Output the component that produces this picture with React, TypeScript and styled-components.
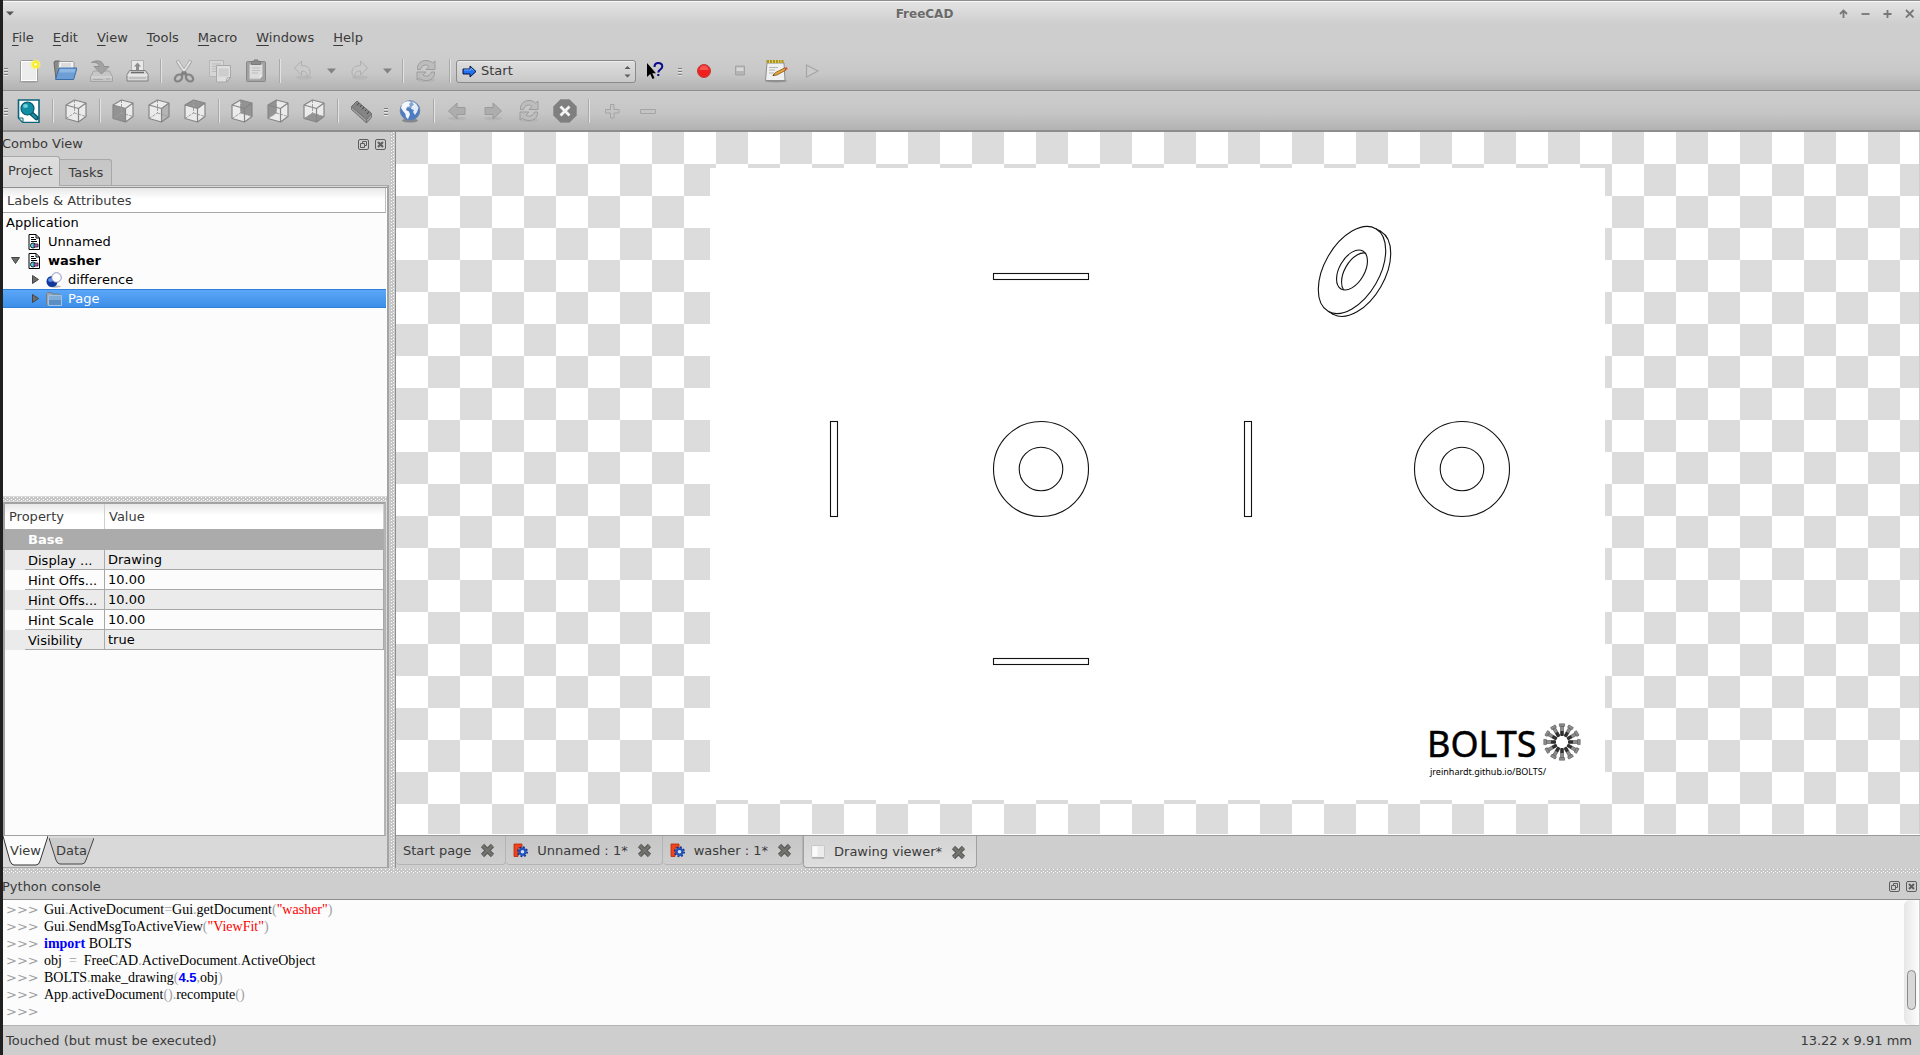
import React from "react";
import styled, { createGlobalStyle, css } from "styled-components";

const UI = `"DejaVu Sans", "Liberation Sans", sans-serif`;
const INK = "#3a3a3a";

const Global = createGlobalStyle`
  *, *::before, *::after { box-sizing: border-box; }
  body { margin: 0; background: #cecece; color: ${INK}; font: 13px/16px ${UI}; }
  button, select { font: inherit; color: inherit; margin: 0; padding: 0; border: 0; background: none; }
  ul { list-style: none; margin: 0; padding: 0; }
  svg { display: block; flex: none; }
`;

/* ---------- window chrome ---------- */

const Window = styled.div`
  display: flex;
  flex-direction: column;
  min-height: 100vh;
  border-left: 3px solid #202020;
  background: #cecece;
`;

const TitleBar = styled.header`
  display: flex;
  align-items: center;
  height: 24px;
  padding-top: 2px;
  border-top: 1px solid #8e8e8e;
  box-shadow: inset 0 1px #f8f8f8;
  background: linear-gradient(#e4e4e4, #cecece);
`;

const Title = styled.h1`
  flex: 1;
  margin: 0;
  font-size: 12px;
  line-height: 16px;
  font-weight: bold;
  text-align: center;
  color: #6a6a6a;
  text-shadow: 0 1px #e6e6e6;
`;

const WindowButton = styled.button<{ $narrow?: boolean }>`
  display: grid;
  place-items: center;
  width: ${(p) => (p.$narrow ? 14 : 22)}px;
  height: 20px;
`;

const MenuBar = styled.nav`
  display: flex;
  height: 28px;
  padding-left: 2px;
`;

const MenuItem = styled.button`
  height: 28px;
  padding: 0 11px 0 7px;
  margin-right: 1px;
  text-align: left;
  &::first-letter { text-decoration: underline; text-underline-offset: 3px; }
`;

const Toolbar = styled.div<{ $last?: boolean }>`
  display: flex;
  align-items: center;
  height: ${(p) => (p.$last ? 41 : 39)}px;
  border-bottom: ${(p) => (p.$last ? 2 : 1)}px solid #8e8e8e;
  background: ${(p) =>
    p.$last ? "linear-gradient(#cdcdcd, #c6c6c6 55%, #b2b2b2)" : "linear-gradient(#cecece, #c8c8c8 55%, #b3b3b3)"};
`;

const Grip = styled.span<{ $wide?: boolean }>`
  width: ${(p) => (p.$wide ? 13 : 8)}px;
  height: 8px;
  padding: 0 ${(p) => (p.$wide ? "4px 0 5px" : "3px 0 1px")};
  margin-top: 2px;
  background: repeating-linear-gradient(#7c7c7c 0 1px, #e6e6e6 1px 2px, transparent 2px 3px) content-box;
`;

const Separator = styled.span`
  width: 11px;
  height: 24px;
  border-left: 5px solid transparent;
  background: linear-gradient(90deg, #a9a9a9 1px, #e2e2e2 1px 2px, transparent 2px) padding-box;
`;

const ToolButton = styled.button<{ $menu?: boolean }>`
  display: grid;
  place-items: center;
  width: ${(p) => (p.$menu ? 20 : 36)}px;
  height: 32px;
`;

const Workbench = styled.div`
  display: grid;
  align-items: center;
  width: 180px;
  height: 23px;
  margin: 0 1px;
  border: 1px solid #8a8a8a;
  border-radius: 3px;
  background: linear-gradient(#dedede, #c9c9c9);
  box-shadow: inset 0 1px #ededed;
  > * { grid-area: 1 / 1; }
  > svg { pointer-events: none; margin-left: 5px; }
  > svg:last-child { justify-self: end; margin-right: 4px; }
`;

const WorkbenchSelect = styled.select`
  appearance: none;
  width: 100%;
  height: 21px;
  padding-left: 24px;
  outline: none;
`;

/* ---------- work area ---------- */

const Work = styled.main`
  display: flex;
  flex: 1;
  min-height: 0;
`;

const dots = css`
  background:
    conic-gradient(at 1px 1px, transparent 75%, #fff 0) 0 0 / 4px 3px,
    conic-gradient(at 1px 1px, transparent 75%, #fff 0) 2px 1px / 4px 3px,
    #c6c6c6;
  background-clip: content-box;
`;

const Splitter = styled.div<{ $vertical?: boolean }>`
  flex: none;
  ${(p) => (p.$vertical ? "width: 7px; padding: 0 1px; border-right: 1px solid #8e8e8e;" : "height: 6px; padding: 1px 0;")}
  ${dots}
`;

const SidePanel = styled.aside`
  display: flex;
  flex-direction: column;
  flex: none;
  width: 386px;
`;

const DockTitle = styled.div<{ $line?: boolean }>`
  display: flex;
  align-items: center;
  flex: none;
  height: ${(p) => (p.$line ? 26 : 24)}px;
  padding-right: 3px;
  ${(p) => p.$line && "border-bottom: 1px solid #8e8e8e;"}
  h2 { flex: 1; margin: 0 0 0 -1px; font: inherit; }
`;

const DockButton = styled.button`
  width: 11px;
  height: 11px;
  margin-left: 6px;
`;

const ComboTabs = styled.div`
  display: flex;
  align-items: flex-end;
  flex: none;
  height: 30px;
  border-bottom: 1px solid #a8a8a8;
`;

const ComboTab = styled.button<{ $active?: boolean }>`
  height: ${(p) => (p.$active ? 30 : 26)}px;
  padding: ${(p) => (p.$active ? "0 7px 2px 5px" : "0 8px")};
  margin-bottom: ${(p) => (p.$active ? -1 : 0)}px;
  border: 1px solid #a8a8a8;
  border-width: 1px 1px 0 0;
  border-radius: 0 3px 0 0;
  background: ${(p) => (p.$active ? "linear-gradient(#dedede, #d6d6d6)" : "linear-gradient(#c6c6c6, #cacaca)")};
`;

const ComboPane = styled.div`
  display: flex;
  flex-direction: column;
  flex: 1;
  padding-top: 1px;
  border-right: 2px solid #a4a4a4;
  border-bottom: 1px solid #a4a4a4;
  background: #d9d9d9;
`;

const Tree = styled.section`
  flex: none;
  height: 309px;
  border-top: 1px solid #8e8e8e;
  background: #fcfcfc;
`;

const TreeHeader = styled.div`
  height: 25px;
  padding: 5px 4px 3px;
  margin-right: 1px;
  border-right: 1px solid #c0c0c0;
  border-bottom: 1px solid #a8a8a8;
  background: linear-gradient(#e8e8e8, #fff 45%);
`;

const TreeRow = styled.li<{ $depth: number; $bold?: boolean; $selected?: boolean }>`
  display: flex;
  align-items: center;
  height: 19px;
  margin-right: 1px;
  padding-left: ${(p) => p.$depth * 20 + 3}px;
  color: ${(p) => (p.$selected ? "#fff" : "#000")};
  font-weight: ${(p) => (p.$bold ? "bold" : "normal")};
  ${(p) =>
    p.$selected &&
    "background: linear-gradient(#5ba6f8, #3d8fe8); border-top: 1px solid #2f80d8; border-bottom: 1px solid #2f80d8;"}
`;

const Arrow = styled.span`
  display: grid;
  place-items: center;
  width: 19px;
`;

const TreeIcon = styled.span`
  display: grid;
  place-items: center;
  width: 16px;
  margin-left: 1px;
  margin-right: 6px;
`;

const PropertyFrame = styled.section`
  flex: 1;
  margin: 0 1px 0 0;
  border: 2px solid #a2a2a2;
  border-right-color: #b4b4b4;
  border-bottom: 1px solid #a2a2a2;
  background: #fcfcfc;
`;

const PropertyTable = styled.table`
  width: 100%;
  border-collapse: separate;
  border-spacing: 0;
  table-layout: fixed;
  color: #000;
  th, td { padding: 1px 0 0; text-align: left; font-weight: normal; overflow: hidden; white-space: nowrap; }
`;

const HeadCell = styled.th<{ $first?: boolean }>`
  width: ${(p) => (p.$first ? "100px" : "auto")};
  height: 25px;
  color: ${INK};
  border-right: 1px solid #d0d0d0;
  background: linear-gradient(#e8e8e8, #fff 45%);
  && { padding-left: 4px; }
`;

const GroupCell = styled.th`
  height: 21px;
  background: #ababab;
  color: #fff;
  && { padding-left: 23px; font-weight: bold; }
`;

const PropertyRow = styled.tr<{ $shade: boolean }>`
  background: ${(p) => (p.$shade ? "#ebebeb" : "#fcfcfc")};
`;

const NameCell = styled.th`
  height: 20px;
  border-right: 1px solid #a8a8a8;
  background: linear-gradient(#a8a8a8, #a8a8a8) 20px 100% / 100% 1px no-repeat;
  && { padding-left: 23px; }
`;

const ValueCell = styled.td`
  border: 1px solid #a8a8a8;
  border-width: 0 1px 1px 0;
  && { padding-left: 3px; }
`;

const ViewTabs = styled.div`
  display: flex;
  height: 31px;
`;

const ViewTab = styled.button<{ $active?: boolean }>`
  display: grid;
  place-items: center;
  height: 30px;
  margin-right: ${(p) => (p.$active ? 1 : 0)}px;
  > * { grid-area: 1 / 1; }
`;

/* ---------- drawing viewer ---------- */

const Viewer = styled.section`
  display: flex;
  flex-direction: column;
  flex: 1;
  min-width: 0;
`;

const Canvas = styled.div`
  display: grid;
  place-items: center;
  flex: 1;
  margin-right: 1px;
  background: conic-gradient(#fff 25%, #dcdcdc 0 50%, #fff 0 75%, #dcdcdc 0) 0 0 / 64px 64px;
`;

const DocTabs = styled.div`
  display: flex;
  align-items: flex-start;
  height: 33px;
  border-top: 1px solid #999;
  box-shadow: 0 -1px #fff;
`;

const DocTab = styled.div<{ $active?: boolean }>`
  display: flex;
  align-items: center;
  height: ${(p) => (p.$active ? 32 : 29)}px;
  padding: 1px 10px 0 7px;
  border: 1px solid ${(p) => (p.$active ? "#a0a0a0" : "#b4b4b4")};
  border-top: 0;
  border-left-width: ${(p) => (p.$active ? 1 : 0)}px;
  border-radius: 0 0 4px 4px;
  background: ${(p) => (p.$active ? "linear-gradient(#d4d4d4, #dedede)" : "linear-gradient(#c6c6c6, #cecece)")};
  > svg { margin-right: 9px; }
`;

const DocTabLabel = styled.button`
  margin-right: 9px;
`;

const CloseButton = styled.button`
  width: 15px;
  height: 15px;
`;

/* ---------- console & status ---------- */

const Console = styled.section`
  display: flex;
  flex: none;
  height: 126px;
  margin-right: 1px;
  border-bottom: 1px solid #b4b4b4;
  background: #fcfcfc;
`;

const ConsoleText = styled.div`
  flex: 1;
  padding: 1px 0 0 3px;
  color: #000;
  font: 14px/17px "Liberation Serif", "DejaVu Serif", serif;
`;

const Line = styled.div`
  display: flex;
  height: 17px;
  white-space: pre;
`;

const Prompt = styled.span`
  width: 38px;
  color: #a0a0a0;
  font: 13px/17px ${UI};
`;

const Token = styled.span<{ $kind?: string }>`
  ${(p) => p.$kind === "op" && "color: #a0a0a0;"}
  ${(p) => p.$kind === "str" && "color: #f00;"}
  ${(p) => p.$kind === "kw" && "color: #00f; font-weight: bold;"}
  ${(p) => p.$kind === "num" && `color: #00f; font: bold 13px/17px "Liberation Sans", sans-serif;`}
`;

const ScrollTrack = styled.div`
  display: flex;
  align-items: flex-end;
  justify-content: center;
  width: 15px;
  padding-bottom: 15px;
  border-radius: 6px;
  background: linear-gradient(90deg, #e6e6e6, #fdfdfd);
`;

const ScrollThumb = styled.div`
  width: 9px;
  height: 40px;
  border: 1px solid #8a8a8a;
  border-radius: 5px;
  background: #d8d8d8;
`;

const StatusBar = styled.footer`
  display: flex;
  justify-content: space-between;
  align-items: center;
  height: 29px;
  padding: 0 8px 0 3px;
`;

/* ---------- icons ---------- */

const Svg = ({ children, w = 24, h = w }: { children: React.ReactNode; w?: number; h?: number }) => (
  <svg width={w} height={h} viewBox={`0 0 ${w} ${h}`} fill="none" aria-hidden="true">
    {children}
  </svg>
);

const NewIcon = () => (
  <Svg>
    <ellipse cx="12" cy="22.8" rx="10" ry="1" fill="#8c8c8c" opacity=".5" />
    <rect x="3.5" y="1.5" width="17" height="21" rx="1" fill="#ededed" stroke="#9c9c9c" />
    <rect x="4.5" y="2.5" width="15" height="19" stroke="#fff" />
    <circle cx="18.5" cy="5.5" r="5" fill="#fbf36a" opacity=".7" />
    <circle cx="18.5" cy="5.5" r="3.2" fill="#fcee10" />
    <circle cx="18.5" cy="5.5" r="1.4" fill="#fffde0" />
  </Svg>
);

const OpenIcon = () => (
  <Svg>
    <path d="M1 3.5 2 2h5l1 1.5h12V20H3z" fill="#8a8a8a" stroke="#666" />
    <path d="M6 2.5h14l1 1V12H5z" fill="#f4f4f4" stroke="#9a9a9a" />
    <path d="M8 5h10M8 7h10" stroke="#c2c2c2" />
    <path d="M6 9h18l-3.4 11.5H2.6z" fill="#6d9fd6" stroke="#3b6ea8" />
    <path d="M7 10h15.6l-1 3.4H6z" fill="#8db6e2" />
  </Svg>
);

const SaveIcon = () => (
  <Svg>
    <path d="M4.5 12h16l3 6v4.5h-22V18z" fill="#c6c6c6" stroke="#a3a3a3" />
    <path d="M2 18h21" stroke="#dcdcdc" />
    <path d="M4 20.5h10M17 20h4" stroke="#a9a9a9" />
    <path d="M2.5 3.5C8 .5 14 1.5 15 7.5h5L12.5 15 5 7.5h5c0-3-3-4.5-7.5-4z" fill="#a2a2a2" stroke="#929292" />
  </Svg>
);

const PrintIcon = () => (
  <Svg>
    <path d="M6.5 1.5h12V14h-12z" fill="#e8e8e8" stroke="#b0b0b0" />
    <path d="M12.5 3.5 16 7.5h-2V11h-3V7.5H9z" fill="#8d8d8d" />
    <path d="M4.5 11.5h16l2.500 4V22H2v-6.5z" fill="#d8d8d8" stroke="#7e7e7e" />
    <path d="M2.5 16h20" stroke="#f5f5f5" />
    <path d="M6 13.5h13" stroke="#6b6b6b" strokeWidth="1.5" />
    <path d="M4 19h17" stroke="#a8a8a8" />
  </Svg>
);

const CutIcon = () => (
  <Svg>
    <path d="M5 1.5 14.5 16M19 1.5 9.5 16" stroke="#a6a6a6" strokeWidth="3.4" />
    <path d="M5.5 2 14 15M18.5 2 10 15" stroke="#e3e3e3" strokeWidth="1.8" />
    <path d="M12 12.5 9.5 16.5M12 12.5l2.500 4" stroke="#808080" strokeWidth="3" />
    <ellipse cx="6.5" cy="19" rx="4" ry="3" transform="rotate(-38 6.5 19)" stroke="#858585" strokeWidth="2.3" />
    <ellipse cx="17.5" cy="19" rx="4" ry="3" transform="rotate(38 17.5 19)" stroke="#858585" strokeWidth="2.3" />
  </Svg>
);

const CopyIcon = () => (
  <Svg>
    <path d="M1.5 1.5h14v16h-14z" fill="#d6d6d6" stroke="#b6b6b6" />
    <path d="M4 5h9M4 7.5h9M4 10h4M4 12.500h4" stroke="#b9b9b9" />
    <path d="M8.5 6.5h14v12l-4 4.5h-10z" fill="#dedede" stroke="#a8a8a8" />
    <path d="M10.5 9.5h10v8h-10z" fill="#cdcdcd" />
    <path d="m18.5 23 .5-4 3.5-.5z" fill="#f6f6f6" stroke="#a0a0a0" />
  </Svg>
);

const PasteIcon = () => (
  <Svg>
    <rect x="2.5" y="2.5" width="19" height="20" rx="1" fill="#a2a2a2" stroke="#868686" />
    <path d="M5.5 5.5h13v11l-3 3.5h-10z" fill="#dcdcdc" stroke="#bbb" />
    <path d="M8 9h8M8 11.5h8M8 14h6" stroke="#bcbcbc" />
    <path d="m15.5 20 .3-3.2 2.700-.3z" fill="#f2f2f2" />
    <path d="M7.5 5.5v-3H10V1h4v1.5h2.5v3z" fill="#8c8c8c" stroke="#7a7a7a" />
  </Svg>
);

const UndoIcon = ({ flip }: { flip?: boolean }) => (
  <Svg>
    <ellipse cx="13" cy="18.500" rx="8" ry="2" fill="#aaa" opacity=".4" />
    <g transform={flip ? "matrix(-1 0 0 1 24 0)" : undefined}>
      <path
        d="M3.500 9 10.500 2v4.500c5.500 0 9 3 8.500 7.500-.3 2-1.500 3.500-3 4.500 1-4-.8-6.500-5.500-6.500V16z"
        fill="#cacaca"
        stroke="#afafaf"
      />
    </g>
  </Svg>
);

const DropIcon = () => (
  <Svg w={9} h={6}>
    <path d="M0 .5h9L4.5 5.5z" fill="#828282" />
  </Svg>
);

const RefreshIcon = () => (
  <Svg>
    <ellipse cx="12" cy="21" rx="9" ry="2" fill="#aaa" opacity=".5" />
    <path d="M3.500 10.500C3 5 7 1.500 12 1.500c3 0 5 1 6.500 2.500l2.500-2v8.500h-9l3-3C12 4.500 8 6 6.500 10.500z" fill="#bdbdbd" stroke="#9c9c9c" />
    <path d="M20.500 13c.5 5.500-3.500 8.500-8.500 8.500-3 0-5-1-6.500-2.500L3 21v-8h9l-3 3c3 2.500 7 1 8.500-3z" fill="#bdbdbd" stroke="#9c9c9c" />
  </Svg>
);

const StartIcon = () => (
  <Svg w={15} h={13}>
    <path d="M1 4h7V1l6 5.5L8 12V9H1z" fill="#1f6fee" stroke="#05123c" strokeLinejoin="round" />
    <path d="M2 5h7V3l2.500 2.500" stroke="#6fb0ff" />
  </Svg>
);

const SpinIcon = () => (
  <Svg w={7} h={13}>
    <path d="M.5 4 3.5 1l3 3zM.5 9.5l3 3 3-3z" fill="#5c5c5c" />
  </Svg>
);

const WhatsThisIcon = () => (
  <Svg>
    <path d="M4 4v14l3.200-3 2.300 5 2-1-2.200-4.800H13z" fill="#000" />
    <path d="M11.500 8c0-3 1.800-4 3.800-4s4 1.200 4 3.500c0 3-4 3-4 6" stroke="#0a0a8c" strokeWidth="2" />
    <path d="M14.300 15h2v2h-2z" fill="#0a0a8c" />
  </Svg>
);

const RecordIcon = () => (
  <Svg>
    <circle cx="12" cy="12" r="6.5" fill="#f02020" stroke="#c23a3a" />
    <path d="M7.500 11a4.500 4.500 0 0 1 9 0z" fill="#f86a6a" opacity=".7" />
  </Svg>
);

const StopMacroIcon = () => (
  <Svg>
    <path d="M7.5 7h9v9h-9z" fill="#b4b4b4" stroke="#a4a4a4" />
    <path d="M8.5 8.5h7V12h-7z" fill="#d8d8d8" />
  </Svg>
);

const EditMacroIcon = () => (
  <Svg>
    <ellipse cx="12" cy="22" rx="11" ry="1.5" fill="#777" opacity=".6" />
    <path d="M3 4h17l1 17.5H1.5z" fill="#f0f0f0" stroke="#8e8e8e" />
    <path d="M2.5 1h17v3h-17z" fill="#a8962a" />
    <path d="M5.5 1v3M8.5 1v3M11.5 1v3M14.5 1v3M17 1v3" stroke="#e0d060" />
    <path d="M5 8.5h9M5 11h6M5 14h5" stroke="#b4b4b4" />
    <path d="m9 16.500 2.500-3 9-4.500 1.500 2-9 5z" fill="#e8a33a" stroke="#7c5a1e" strokeWidth=".8" />
    <path d="m20.500 9 2-1 1.300 2-1.900 1z" fill="#e04848" />
    <path d="m8.500 17 2-.7-.7-1z" fill="#222" />
  </Svg>
);

const PlayIcon = () => (
  <Svg>
    <path d="m6.500 6 11.500 6-11.500 6z" fill="#cbcbcb" stroke="#a6a6a6" strokeWidth="1.200" />
  </Svg>
);

const FitAllIcon = () => (
  <Svg>
    <path d="M1.500 1H22v22.500H6L1.500 19z" fill="#fff" stroke="#0c6478" strokeWidth="1.600" />
    <path d="M1.500 19H6v4.500z" fill="#d8f0f4" stroke="#0c6478" />
    <path d="m14.500 14.500 5 4.500" stroke="#085568" strokeWidth="4.600" strokeLinecap="round" />
    <path d="m15 15 4 3.700" stroke="#1b95a8" strokeWidth="2" strokeLinecap="round" />
    <circle cx="10.500" cy="9.500" r="6.500" fill="#0f8ea4" stroke="#08586c" strokeWidth="1.200" />
    <ellipse cx="8.500" cy="7" rx="2.500" ry="2" fill="#6fd0dc" />
  </Svg>
);

const FACES: Record<string, string> = {
  front: "M2 6 14.500 9.500V23L2 19.500z",
  right: "M14.500 9.500 22 4v13.500L14.500 23z",
  top: "M2 6l8.500-5L22 4l-7.500 5.500z",
  rear: "M10.500 1 22 4v13.500L10.500 14z",
  left: "M2 6l8.500-5v13L2 19.500z",
  bottom: "M2 19.500 10.500 14 22 17.500 14.500 23z",
};

const CubeIcon = ({ face }: { face?: string }) => (
  <Svg>
    <path d="M2 6l8.500-5L22 4v13.500L14.500 23 2 19.500z" fill="#ebebeb" />
    {face && <path d={FACES[face]} fill={face === "right" ? "#b4b4b4" : "#939393"} />}
    <path d="M10.500 1v13L2 19.500M10.500 14 22 17.500" stroke="#a0a0a0" strokeDasharray="3 1" />
    <path
      d="M2 6l8.500-5L22 4v13.500L14.500 23 2 19.500zL14.500 9.500 22 4M14.500 9.500V23"
      stroke="#858585"
      strokeWidth="1.200"
      strokeLinejoin="round"
    />
  </Svg>
);

const MeasureIcon = () => (
  <Svg>
    <path d="M2.500 7.500 8 2l14.500 12.500-5 6z" fill="#858585" stroke="#6c6c6c" />
    <path d="M2.500 7.500v3l15 13.500v-3.500zM17.500 24l5-5.500v-4l-5 6z" fill="#9c9c9c" stroke="#747474" />
    <path d="m10 4-2 2.500M12.500 6l-1.500 2M15 8l-2 2.500M17.500 10.500 16 12M20 12.500 18 15" stroke="#444" />
  </Svg>
);

const GlobeIcon = () => (
  <Svg>
    <ellipse cx="12" cy="21.500" rx="8" ry="2" fill="#555" opacity=".5" />
    <circle cx="12" cy="11.500" r="9.800" fill="#4d7dc0" stroke="#6c84ac" />
    <path d="M4 5.500C7 2 10 1.800 13 3l-2 2 1 2-3 1-1 3 3 1.500 1 3-2 4.500c-2-1-2.500-3-2.500-5L5 12 3 9z" fill="#f2f6fb" />
    <path d="M14 3c3 .5 5.500 3 6.500 6l-1.500 4-2 3-2-3 1-2-3-1 1-3 2-1z" fill="#e2ebf6" />
    <ellipse cx="12" cy="5.500" rx="7" ry="3.500" fill="#fff" opacity=".3" />
  </Svg>
);

const NavIcon = ({ flip }: { flip?: boolean }) => (
  <Svg>
    <ellipse cx="12" cy="19.500" rx="9" ry="1.800" fill="#aaa" opacity=".5" />
    <g transform={flip ? "matrix(-1 0 0 1 24 0)" : undefined}>
      <path d="M3.500 12 12 4v4.500h8v7h-8V20z" fill="#adadad" stroke="#9a9a9a" />
    </g>
  </Svg>
);

const StopIcon = () => (
  <Svg>
    <path d="M7.500.5h9l7 7v9l-7 7h-9l-7-7v-9z" fill="#7f7f7f" stroke="#959595" />
    <path d="m7.500 7.500 9 9M16.500 7.500l-9 9" stroke="#f4f4f4" strokeWidth="2.800" />
  </Svg>
);

const ZoomIcon = ({ minus }: { minus?: boolean }) => (
  <Svg>
    <path
      d={minus ? "M4.500 10.500h15v4h-15z" : "M10.500 5.500H14v5h5V14h-5v5h-3.500v-5h-5v-3.500h5z"}
      fill="#c4c4c4"
      stroke="#a4a4a4"
    />
  </Svg>
);

const FloatIcon = () => (
  <Svg w={11}>
    <rect x=".5" y=".5" width="10" height="10" rx="1.500" stroke="#5e5e5e" />
    <path d="M4.500 4.500v-2h4v4h-2M2.500 4.500h4v4h-4z" stroke="#5e5e5e" />
  </Svg>
);

const DockCloseIcon = () => (
  <Svg w={11}>
    <rect x=".5" y=".5" width="10" height="10" rx="1.500" stroke="#5e5e5e" />
    <path d="m3 3 5 5M8 3 3 8" stroke="#5e5e5e" strokeWidth="2" />
  </Svg>
);

const CloseIcon = () => (
  <Svg w={15}>
    <path d="m2.500 2.500 10 10M12.500 2.500l-10 10" stroke="#5f605c" strokeWidth="4.600" />
    <path d="m2.500 2.500 10 10M12.500 2.500l-10 10" stroke="#737471" strokeWidth="2" />
  </Svg>
);

const DocumentIcon = () => (
  <Svg w={16}>
    <path d="M3 .5h7L13.500 4v11.500H3z" fill="#fff" stroke="#000" />
    <path d="M10 .5V4h3.500M5 3.500h3M5 5.500h5M5 7.500h6" stroke="#000" />
    <circle cx="7" cy="11.500" r="2.500" fill="#5fd4d8" stroke="#123" />
    <path d="M8 10h4v3H8z" fill="#b45ad0" stroke="#222" strokeWidth=".8" />
  </Svg>
);

const DifferenceIcon = () => (
  <Svg w={16}>
    <ellipse cx="9" cy="14.500" rx="6" ry="1.200" fill="#888" opacity=".6" />
    <circle cx="6" cy="9.500" r="5.500" fill="#12369c" />
    <ellipse cx="4.500" cy="8" rx="2.500" ry="2" fill="#5a90e8" />
    <circle cx="10.500" cy="5.500" r="4.800" fill="#fdfdff" stroke="#8f94bc" />
  </Svg>
);

const FolderIcon = () => (
  <Svg w={16}>
    <path d="M.5 14.500v-12l1-1h4l1 1.500h7v2" fill="#98a6b4" stroke="#6f7f90" />
    <path d="M2.500 4.500h13v10h-13z" fill="#5b8fc4" stroke="#a2c2e2" />
    <path d="M3 5h12v4H3z" fill="#7fabd6" />
  </Svg>
);

const ArrowIcon = ({ open }: { open?: boolean }) => (
  <Svg w={9}>
    <path d={open ? "M.5 1.500h8l-4 6z" : "M1.500.5v8l6-4z"} fill="#6c6c6c" stroke="#454545" />
  </Svg>
);

const FreeCadIcon = () => (
  <Svg w={15}>
    <path d="M1 1h8v4H5v2h3v3H5v3.500H1z" fill="#f0441c" stroke="#b42808" strokeWidth=".8" />
    <circle cx="9.500" cy="8.800" r="4.600" stroke="#10328c" strokeWidth="1.800" strokeDasharray="1.800 1.800" />
    <circle cx="9.500" cy="8.800" r="3" fill="#cfe0fa" stroke="#2352b8" strokeWidth="2.400" />
  </Svg>
);

const PageIcon = () => (
  <Svg w={14}>
    <rect x=".5" y=".5" width="13" height="12" rx="1" fill="#ececec" stroke="#c8c8c8" />
    <path d="M1 13h12" stroke="#9a9a9a" />
    <path d="M1.500 1.500h5v10h-5z" fill="#fbfbfb" />
  </Svg>
);

/* ---------- the drawing sheet ---------- */

const SHEET = { width: 895, height: 632 };
const BOLT_ANGLES = Array.from({ length: 12 }, (_, i) => i * 30);

const Washer = ({ cx }: { cx: number }) => (
  <>
    <circle cx={cx} cy="301" r="47.500" />
    <circle cx={cx} cy="301" r="21.800" />
  </>
);

const Sheet = () => (
  <svg
    width={SHEET.width}
    height={SHEET.height}
    viewBox={`0 0 ${SHEET.width} ${SHEET.height}`}
    role="img"
    aria-label="Washer drawing"
  >
    <defs>
      <clipPath id="bore">
        <ellipse rx="21.900" ry="12.600" />
      </clipPath>
    </defs>
    <rect {...SHEET} fill="#fff" />
    <g fill="none" stroke="#111" strokeWidth="1.100">
      <rect x="283.500" y="105.500" width="95" height="6" />
      <rect x="283.500" y="490.500" width="95" height="6" />
      <rect x="120.500" y="253.500" width="7" height="95" />
      <rect x="534.500" y="253.500" width="7" height="95" />
      <Washer cx={331} />
      <Washer cx={752} />
      <g transform="translate(642 102) rotate(-60)">
        <ellipse cy="5.800" rx="47.700" ry="27.500" />
        <path d="M47.700 0v5.800M-47.700 0v5.800" />
        <ellipse rx="47.700" ry="27.500" fill="#fff" />
        <ellipse rx="21.900" ry="12.600" />
        <g clipPath="url(#bore)">
          <ellipse cy="5.800" rx="21.900" ry="12.600" />
        </g>
      </g>
    </g>
    <g fill="#000" fontFamily={`"Noto Sans", "Open Sans", sans-serif`}>
      <text x="717" y="589" fontSize="36" stroke="#000" strokeWidth=".5">BOLTS</text>
      <text x="720" y="607" fontSize="9">jreinhardt.github.io/BOLTS/</text>
    </g>
    <g transform="translate(852 574)">
      {BOLT_ANGLES.map((a) => (
        <g key={a} transform={`rotate(${a})`}>
          <path d="M-1.500-16h3v9h-3z" fill="#8c8c8c" stroke="#555" strokeWidth=".6" />
          <path d="M-1.500-11h3v5h-3z" fill="#2e2e2e" />
          <path d="M-2.600-18.200h5.200v2.600h-5.200z" fill="#8e8e8e" stroke="#555" strokeWidth=".6" />
        </g>
      ))}
    </g>
  </svg>
);

/* ---------- data ---------- */

const MENUS = ["File", "Edit", "View", "Tools", "Macro", "Windows", "Help"];

const PROPERTIES = [
  ["Display ...", "Drawing"],
  ["Hint Offs...", "10.00"],
  ["Hint Offs...", "10.00"],
  ["Hint Scale", "10.00"],
  ["Visibility", "true"],
];

const LOG: [string, string?][][] = [
  [["Gui"], [".", "op"], ["ActiveDocument"], ["=", "op"], ["Gui"], [".", "op"], ["getDocument"], ["(", "op"], ['"washer"', "str"], [")", "op"]],
  [["Gui"], [".", "op"], ["SendMsgToActiveView"], ["(", "op"], ['"ViewFit"', "str"], [")", "op"]],
  [["import", "kw"], [" BOLTS"]],
  [["obj "], [" = ", "op"], [" FreeCAD"], [".", "op"], ["ActiveDocument"], [".", "op"], ["ActiveObject"]],
  [["BOLTS"], [".", "op"], ["make_drawing"], ["(", "op"], ["4.5", "num"], [",", "op"], ["obj"], [")", "op"]],
  [["App"], [".", "op"], ["activeDocument"], ["().", "op"], ["recompute"], ["()", "op"]],
  [],
];

const Tool = ({ label, menu, children }: { label: string; menu?: boolean; children: React.ReactNode }) => (
  <ToolButton type="button" aria-label={label} $menu={menu}>
    {children}
  </ToolButton>
);

const DockButtons = () => (
  <>
    <DockButton type="button" aria-label="Float"><FloatIcon /></DockButton>
    <DockButton type="button" aria-label="Close"><DockCloseIcon /></DockButton>
  </>
);

const DocumentTab = ({ label, icon, active }: { label: string; icon?: React.ReactNode; active?: boolean }) => (
  <DocTab $active={active}>
    {icon}
    <DocTabLabel type="button">{label}</DocTabLabel>
    <CloseButton type="button" aria-label={`Close ${label}`}><CloseIcon /></CloseButton>
  </DocTab>
);

const WINDOW_GLYPHS: [string, string][] = [
  ["Shade", "M4.500 9V1.500M1 5l3.500-3.500L8 5"],
  ["Minimize", "M.5 5h8"],
  ["Maximize", "M.5 5h8M4.500 1v8"],
  ["Close", "m1 1 7.500 7.500M8.500 1 1 8.500"],
];

export default function App() {
  return (
    <>
      <Global />
      <Window>
        <TitleBar>
          <WindowButton type="button" aria-label="Window menu" $narrow>
            <Svg w={8} h={5}><path d="M0 .5h8L4 4.500z" fill="#555" /></Svg>
          </WindowButton>
          <Title>FreeCAD</Title>
          {WINDOW_GLYPHS.map(([label, d]) => (
            <WindowButton key={label} type="button" aria-label={label}>
              <Svg w={9}><path d={d} stroke="#777" strokeWidth="1.800" /></Svg>
            </WindowButton>
          ))}
        </TitleBar>

        <MenuBar aria-label="Main menu">
          {MENUS.map((m) => <MenuItem key={m} type="button">{m}</MenuItem>)}
        </MenuBar>

        <Toolbar>
          <Grip />
          <Tool label="New"><NewIcon /></Tool>
          <Tool label="Open"><OpenIcon /></Tool>
          <Tool label="Save"><SaveIcon /></Tool>
          <Tool label="Print"><PrintIcon /></Tool>
          <Separator />
          <Tool label="Cut"><CutIcon /></Tool>
          <Tool label="Copy"><CopyIcon /></Tool>
          <Tool label="Paste"><PasteIcon /></Tool>
          <Separator />
          <Tool label="Undo"><UndoIcon /></Tool>
          <Tool label="Undo list" menu><DropIcon /></Tool>
          <Tool label="Redo"><UndoIcon flip /></Tool>
          <Tool label="Redo list" menu><DropIcon /></Tool>
          <Separator />
          <Tool label="Refresh"><RefreshIcon /></Tool>
          <Separator />
          <Workbench>
            <WorkbenchSelect aria-label="Workbench" defaultValue="Start">
              <option>Start</option>
            </WorkbenchSelect>
            <StartIcon />
            <SpinIcon />
          </Workbench>
          <Tool label="What's this?"><WhatsThisIcon /></Tool>
          <Grip $wide />
          <Tool label="Record macro"><RecordIcon /></Tool>
          <Tool label="Stop macro"><StopMacroIcon /></Tool>
          <Tool label="Edit macros"><EditMacroIcon /></Tool>
          <Tool label="Run macro"><PlayIcon /></Tool>
        </Toolbar>

        <Toolbar $last>
          <Grip />
          <Tool label="Fit all"><FitAllIcon /></Tool>
          <Separator />
          <Tool label="Axonometric"><CubeIcon /></Tool>
          <Separator />
          <Tool label="Front"><CubeIcon face="front" /></Tool>
          <Tool label="Right"><CubeIcon face="right" /></Tool>
          <Tool label="Top"><CubeIcon face="top" /></Tool>
          <Separator />
          <Tool label="Rear"><CubeIcon face="rear" /></Tool>
          <Tool label="Left"><CubeIcon face="left" /></Tool>
          <Tool label="Bottom"><CubeIcon face="bottom" /></Tool>
          <Separator />
          <Tool label="Measure"><MeasureIcon /></Tool>
          <Grip $wide />
          <Tool label="Open website"><GlobeIcon /></Tool>
          <Separator />
          <Tool label="Previous page"><NavIcon /></Tool>
          <Tool label="Next page"><NavIcon flip /></Tool>
          <Tool label="Reload"><RefreshIcon /></Tool>
          <Tool label="Stop loading"><StopIcon /></Tool>
          <Separator />
          <Tool label="Zoom in"><ZoomIcon /></Tool>
          <Tool label="Zoom out"><ZoomIcon minus /></Tool>
        </Toolbar>

        <Work>
          <SidePanel>
            <DockTitle>
              <h2>Combo View</h2>
              <DockButtons />
            </DockTitle>
            <ComboTabs>
              <ComboTab type="button" $active>Project</ComboTab>
              <ComboTab type="button">Tasks</ComboTab>
            </ComboTabs>
            <ComboPane>
              <Tree>
                <TreeHeader>Labels &amp; Attributes</TreeHeader>
                <ul>
                  <TreeRow $depth={0}>Application</TreeRow>
                  <TreeRow $depth={0}>
                    <Arrow />
                    <TreeIcon><DocumentIcon /></TreeIcon>Unnamed
                  </TreeRow>
                  <TreeRow $depth={0} $bold>
                    <Arrow><ArrowIcon open /></Arrow>
                    <TreeIcon><DocumentIcon /></TreeIcon>washer
                  </TreeRow>
                  <TreeRow $depth={1}>
                    <Arrow><ArrowIcon /></Arrow>
                    <TreeIcon><DifferenceIcon /></TreeIcon>difference
                  </TreeRow>
                  <TreeRow $depth={1} $selected>
                    <Arrow><ArrowIcon /></Arrow>
                    <TreeIcon><FolderIcon /></TreeIcon>Page
                  </TreeRow>
                </ul>
              </Tree>
              <Splitter />
              <PropertyFrame>
                <PropertyTable>
                  <thead>
                    <tr>
                      <HeadCell $first>Property</HeadCell>
                      <HeadCell>Value</HeadCell>
                    </tr>
                  </thead>
                  <tbody>
                    <tr><GroupCell colSpan={2}>Base</GroupCell></tr>
                    {PROPERTIES.map(([name, value], i) => (
                      <PropertyRow key={i} $shade={i % 2 === 0}>
                        <NameCell scope="row">{name}</NameCell>
                        <ValueCell>{value}</ValueCell>
                      </PropertyRow>
                    ))}
                  </tbody>
                </PropertyTable>
              </PropertyFrame>
              <ViewTabs>
                <ViewTab type="button" $active>
                  <Svg w={45} h={30}>
                    <path d="M0 0 7 25q1.500 4 4 4h22q3 0 4-4L45 0" fill="#fcfcfc" stroke="#333" />
                  </Svg>
                  <span>View</span>
                </ViewTab>
                <ViewTab type="button">
                  <Svg w={45} h={30}>
                    <path d="M0 2 7 24q1.500 4 4 4h22q3 0 4-4L45 2" fill="#cbcbcb" stroke="#444" />
                  </Svg>
                  <span>Data</span>
                </ViewTab>
              </ViewTabs>
            </ComboPane>
          </SidePanel>
          <Splitter $vertical />
          <Viewer>
            <Canvas><Sheet /></Canvas>
            <DocTabs>
              <DocumentTab label="Start page" />
              <DocumentTab label="Unnamed : 1*" icon={<FreeCadIcon />} />
              <DocumentTab label="washer : 1*" icon={<FreeCadIcon />} />
              <DocumentTab label="Drawing viewer*" icon={<PageIcon />} active />
            </DocTabs>
          </Viewer>
        </Work>

        <Splitter />
        <DockTitle $line>
          <h2>Python console</h2>
          <DockButtons />
        </DockTitle>
        <Console>
          <ConsoleText>
            {LOG.map((tokens, i) => (
              <Line key={i}>
                <Prompt>{">>>"}</Prompt>
                {tokens.map(([text, kind], j) => <Token key={j} $kind={kind}>{text}</Token>)}
              </Line>
            ))}
          </ConsoleText>
          <ScrollTrack><ScrollThumb /></ScrollTrack>
        </Console>
        <StatusBar>
          <span>Touched (but must be executed)</span>
          <span>13.22 x 9.91 mm</span>
        </StatusBar>
      </Window>
    </>
  );
}
